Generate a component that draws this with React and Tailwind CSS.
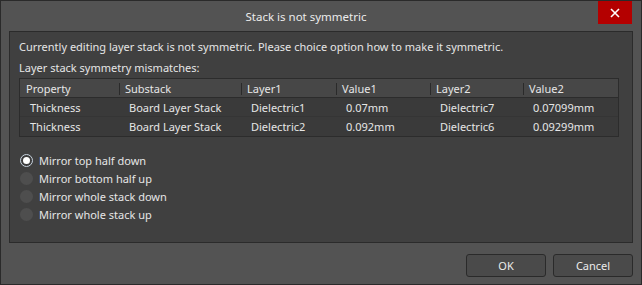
import React, { useState } from 'react';

const columns = ['Property', 'Substack', 'Layer1', 'Value1', 'Layer2', 'Value2'];
const widths = ['w-[99px]', 'w-[122px]', 'w-[95px]', 'w-[94px]', 'w-[93px]', 'flex-1'];

const rows = [
    ['Thickness', 'Board Layer Stack', 'Dielectric1', '0.07mm', 'Dielectric7', '0.07099mm'],
    ['Thickness', 'Board Layer Stack', 'Dielectric2', '0.092mm', 'Dielectric6', '0.09299mm'],
];

const options = ['Mirror top half down', 'Mirror bottom half up', 'Mirror whole stack down', 'Mirror whole stack up'];

function Radio({ checked, label, onClick }) {
    return (
        <div className="flex items-center h-[18px] cursor-default" onClick={onClick}>
            <div
                className={`w-[13px] h-[13px] rounded-full flex items-center justify-center ${
                    checked ? 'bg-[#3c3c3c] border border-[#c8d4e0]' : 'bg-[#4e4e4e]'
                }`}
            >
                {checked && <div className="w-[7px] h-[7px] rounded-full bg-white" />}
            </div>
            <span className="ml-[6px] text-[#e6e6e6]">{label}</span>
        </div>
    );
}

function App() {
    const [choice, setChoice] = useState(0);

    return (
        <div
            className="w-[642px] h-[285px] bg-[#535353] border border-[#2a2a2a] flex flex-col text-[11px] leading-none text-[#e6e6e6]"
            style={{ fontFamily: '"Noto Sans", "Open Sans", sans-serif' }}
        >
            {/* title bar */}
            <div className="h-[30px] flex items-start relative">
                <div className="flex-1 text-center pt-[10px] pr-[30px] text-[11.5px] text-[#ececec]">Stack is not symmetric</div>
                <div className="absolute right-[9px] top-0 w-[34px] h-[23px] bg-[#b40000] flex items-center justify-center">
                    <svg width="10" height="10" viewBox="0 0 10 10">
                        <path d="M1 1 L9 9 M9 1 L1 9" stroke="#ffffff" strokeWidth="1.6" />
                    </svg>
                </div>
            </div>

            {/* main panel */}
            <div className="mx-[8px] h-[212px] bg-[#404040] border border-[#2b2b2b] px-[9px] pt-[9px]">
                <div className="h-[13px]">Currently editing layer stack is not symmetric. Please choice option how to make it symmetric.</div>
                <div className="h-[13px] mt-[8px]">Layer stack symmetry mismatches:</div>

                <div className="mt-[3px] w-[600px] border border-[#2c2c2c] bg-[#3a3a3a]">
                    <div className="flex h-[19px] bg-[#474747] border-b border-[#2c2c2c] items-center">
                        {columns.map((c, i) => (
                            <div key={c} className={`${widths[i]} h-full flex items-center relative pl-[6px]`}>
                                {i > 0 && <div className="absolute left-0 top-[4px] h-[12px] w-px bg-[#2a2a2a]" />}
                                <span>{c}</span>
                            </div>
                        ))}
                    </div>
                    {rows.map((r, ri) => (
                        <div key={ri} className={`flex h-[19px] items-center ${ri === 0 ? 'border-b border-[#353535]' : ''}`}>
                            {r.map((cell, i) => (
                                <div key={i} className={`${widths[i]} pl-[10px]`}>{cell}</div>
                            ))}
                        </div>
                    ))}
                </div>

                <div className="mt-[14px] flex flex-col pl-[1px]">
                    {options.map((o, i) => (
                        <Radio key={o} label={o} checked={choice === i} onClick={() => setChoice(i)} />
                    ))}
                </div>
            </div>

            {/* footer buttons */}
            <div className="flex justify-end gap-[7px] pr-[8px] pt-[11px]">
                <button className="w-[80px] h-[23px] rounded-[3px] bg-[#4a4a4a] border border-[#2a2a2a] text-[#ececec] text-[11px]">OK</button>
                <button className="w-[80px] h-[23px] rounded-[3px] bg-[#4a4a4a] border border-[#2a2a2a] text-[#ececec] text-[11px]">Cancel</button>
            </div>
        </div>
    );
}

export default App;
